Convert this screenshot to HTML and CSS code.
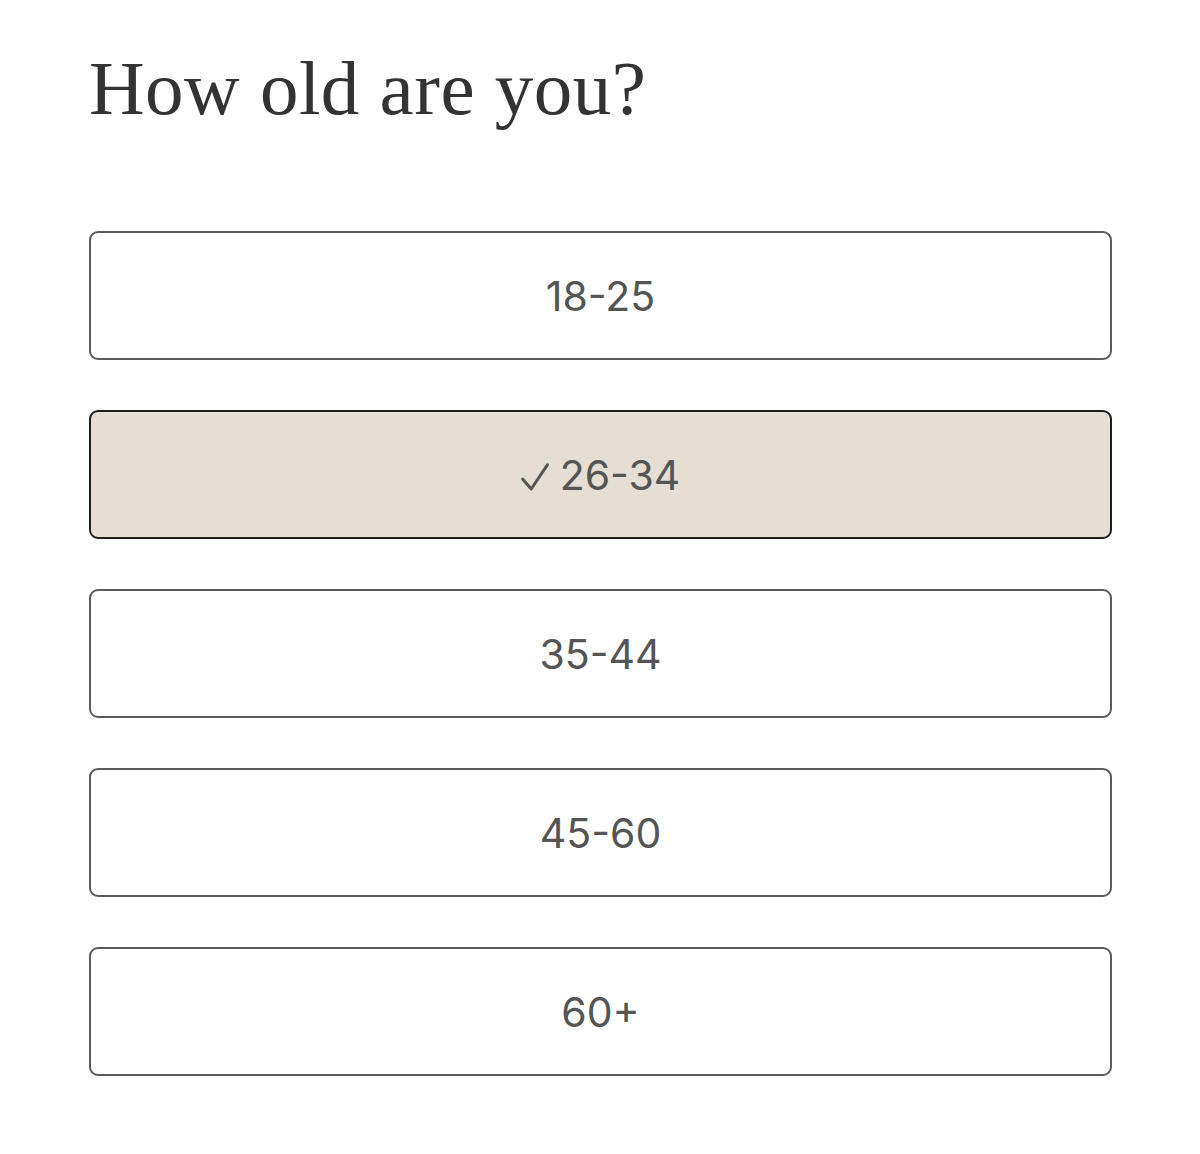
FILE: index.html
```html
<!DOCTYPE html>
<html lang="en">
<head>
<meta charset="utf-8">
<title>How old are you?</title>
<link rel="stylesheet" href="styles.css">
</head>
<body>
<main class="quiz">
  <h1 class="quiz-title">How old are you?</h1>
  <div class="options">
    <button class="option" type="button">18-25</button>
    <button class="option option--selected" type="button">
      <svg class="check" viewBox="0 0 28 28" width="28" height="28" aria-hidden="true"><path d="M1.8 16.2 L10.2 26 L26.4 1.8" fill="none" stroke="#555" stroke-width="3" stroke-linecap="round" stroke-linejoin="round"/></svg>26-34
    </button>
    <button class="option" type="button">35-44</button>
    <button class="option" type="button">45-60</button>
    <button class="option" type="button">60+</button>
  </div>
</main>
</body>
</html>
```

FILE: styles.css
```css
html, body {
  margin: 0;
  padding: 0;
  background: #ffffff;
}

.quiz {
  width: 1023px;
  padding: 50px 0 0 89px;
}

.quiz-title {
  margin: 0;
  font-family: "Liberation Serif", "Times New Roman", serif;
  font-weight: 400;
  font-size: 77px;
  line-height: 77px;
  letter-spacing: 0.5px;
  color: #333333;
}

.options {
  margin-top: 104px;
  display: flex;
  flex-direction: column;
  gap: 50px;
}

.option {
  box-sizing: border-box;
  height: 129px;
  width: 100%;
  display: flex;
  align-items: center;
  justify-content: center;
  gap: 11px;
  border: 2px solid #5a5a5a;
  border-radius: 9px;
  background: #ffffff;
  font-family: Inter, "Liberation Sans", Arial, sans-serif;
  font-size: 41px;
  color: #555555;
  padding: 0;
  cursor: pointer;
}

.option--selected {
  background: #e4ded4;
  border-color: #1e1e1e;
}

.check {
  display: block;
  margin-top: 4px;
}
```
